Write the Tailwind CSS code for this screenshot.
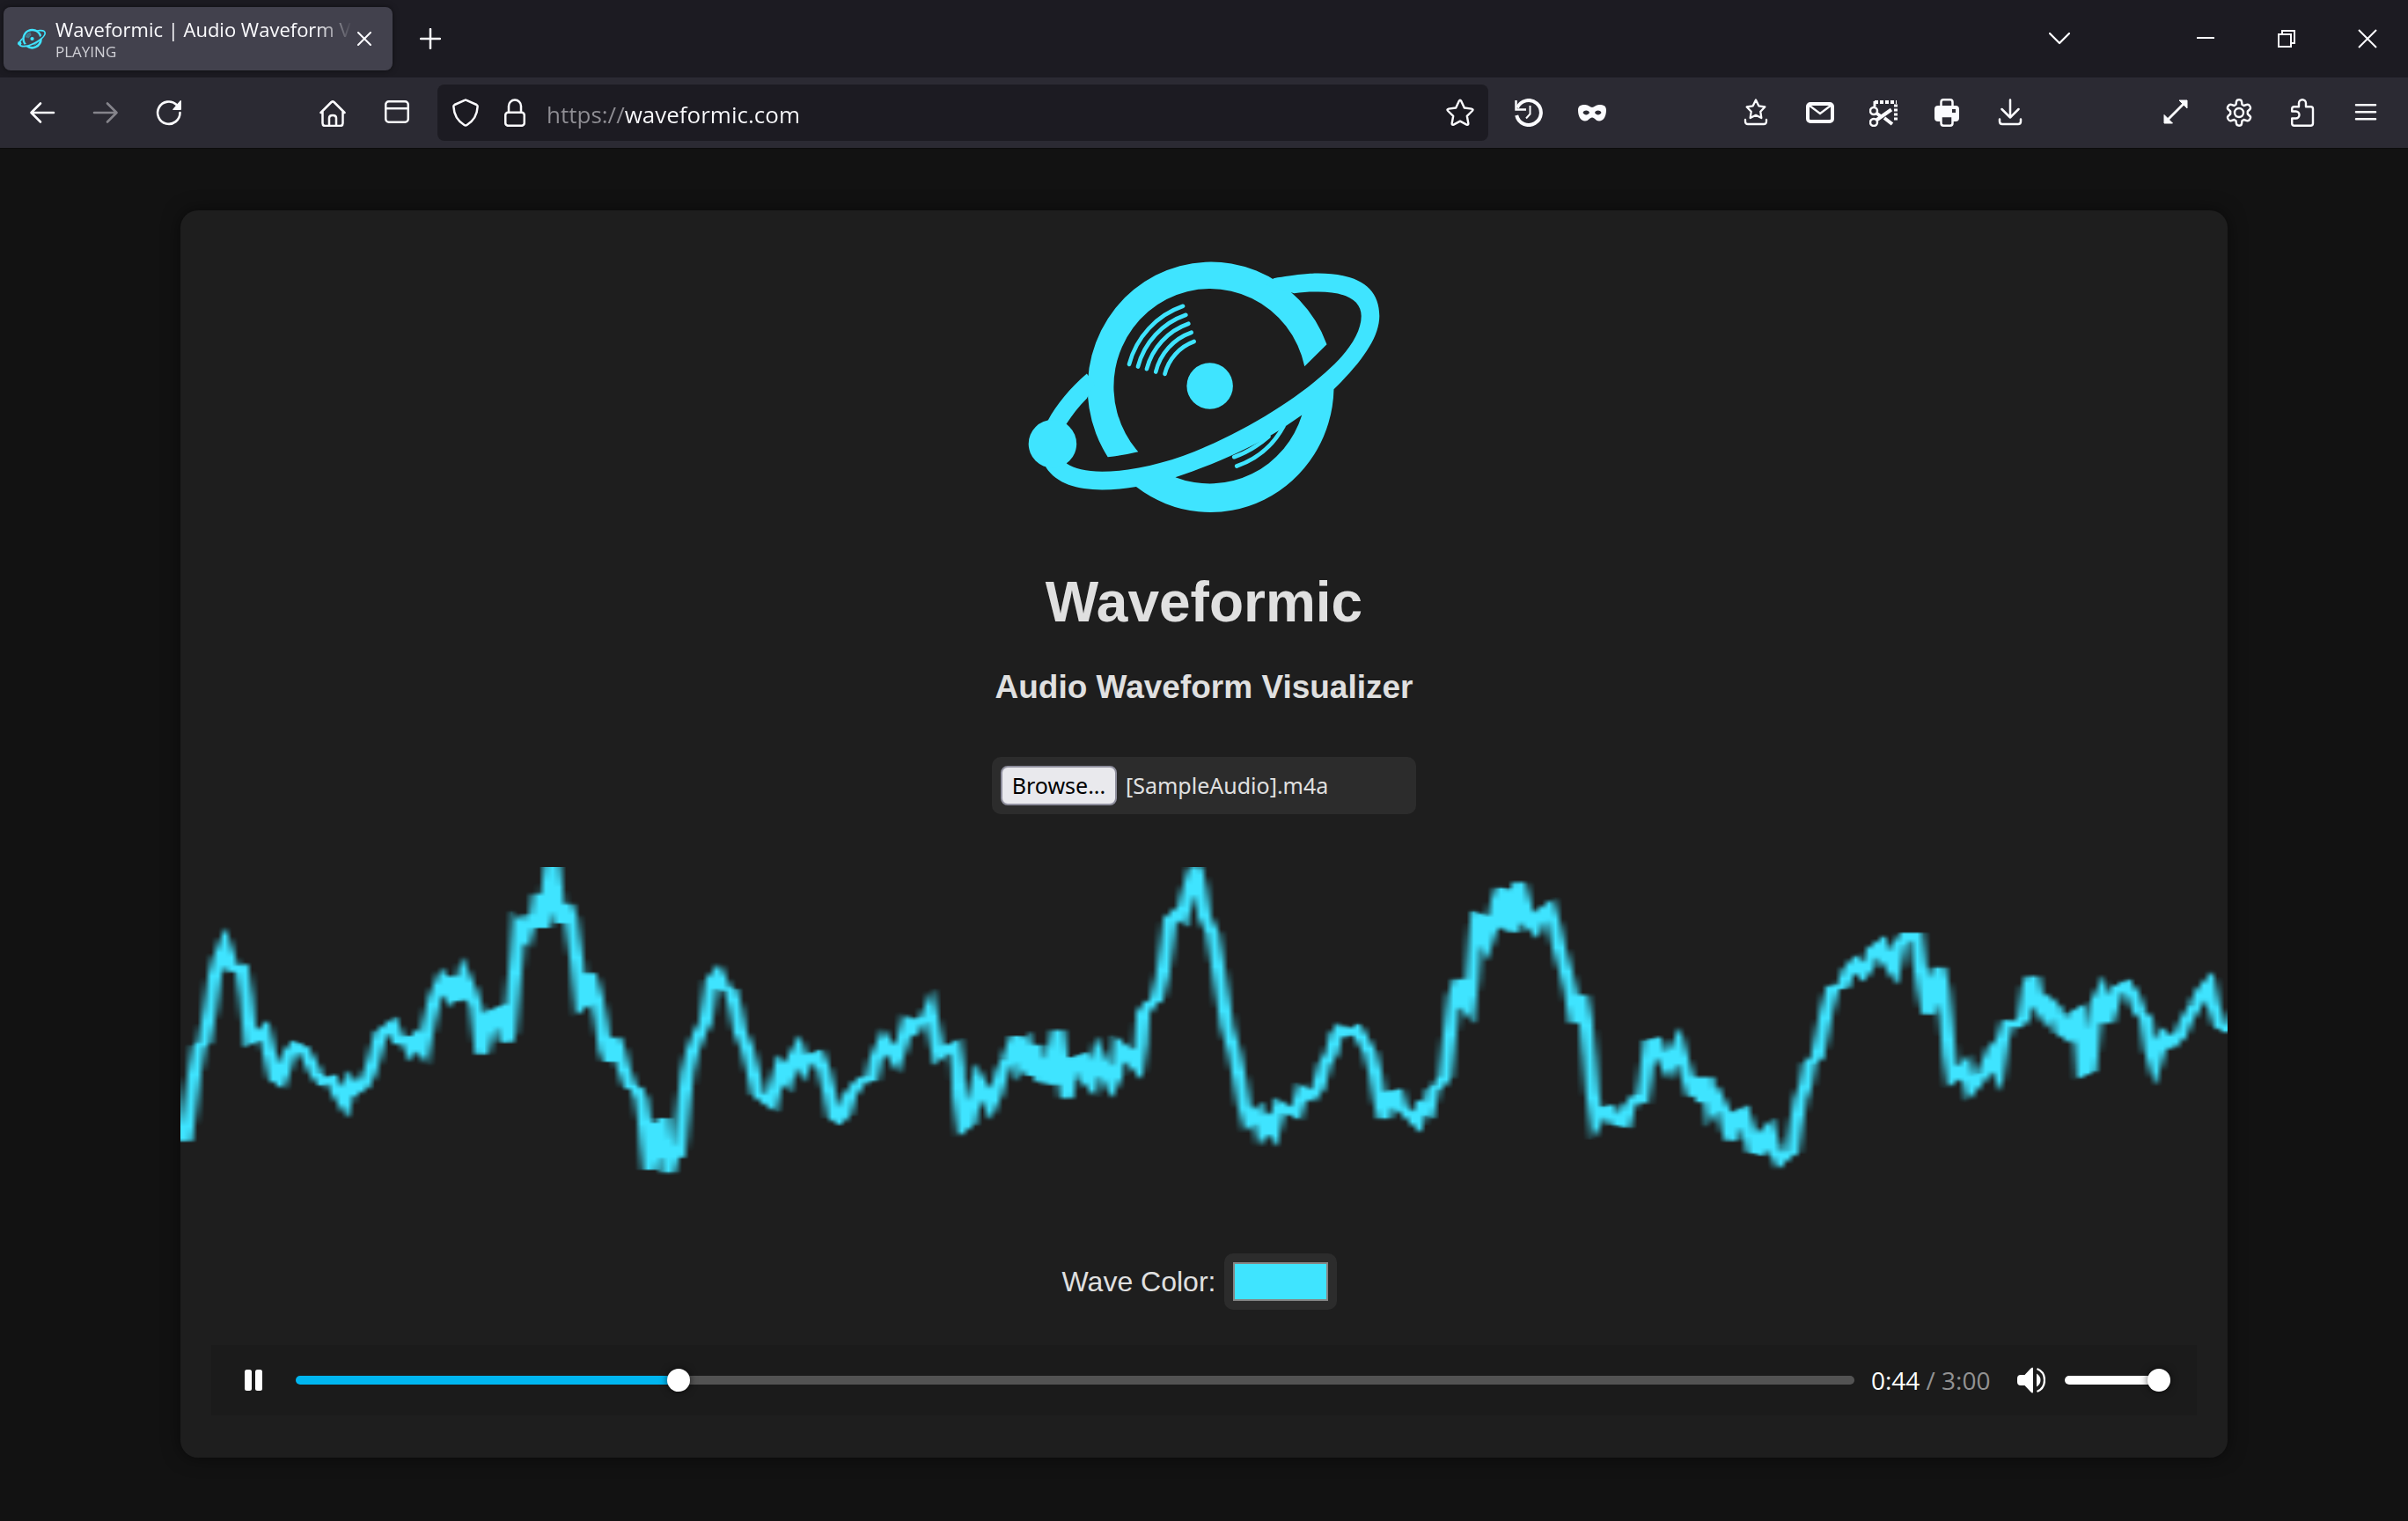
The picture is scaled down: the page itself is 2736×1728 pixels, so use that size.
<!DOCTYPE html>
<html lang="en">
<head>
<meta charset="utf-8">
<title>Waveformic | Audio Waveform Visualizer</title>
<script src="https://cdn.jsdelivr.net/npm/@tailwindcss/browser@4"></script>
</head>
<body class="flex min-h-screen flex-col bg-[#121212] font-['Open_Sans','Noto_Sans',sans-serif] text-[#fbfbfe]">

<svg class="hidden" aria-hidden="true">
  <symbol id="planet" viewBox="84 75 1200 864">
    <g fill="currentColor">
      <path d="M355 750A422 431 0 1 1 1104 365L1028 440A330 334.500 0 1 0 459 732Q410 744 355 750Z"/>
      <path fill-rule="evenodd" d="M922 139C1000 126 1040 122 1075 122C1210 122 1284 170 1284 268C1284 340 1225 425 1128 518A422 431 0 0 1 452 852C415 858 375 862 335 862C250 862 180 842 143 785L166 705L215 773C240 790 280 800 335 800C440 800 570 768 690 715C850 645 1000 550 1100 460C1170 400 1222 330 1222 268C1222 215 1170 185 1075 185C1050 184 1020 186 992 190L900 160ZM586 819C700 782 850 720 965 643L1019 606A330 334.500 0 0 1 586 819Z"/>
      <path d="M150 625C180 570 225 515 283 465L310 500L283 550C255 578 232 608 213 637L166 680Z"/>
      <circle cx="166" cy="705" r="82"/>
      <circle cx="704" cy="507" r="79"/>
    </g>
    <g fill="none" stroke="currentColor" stroke-width="14" stroke-linecap="round">
      <path d="M428 433A288 288 0 0 1 612 234M458 441A256 256 0 0 1 622 264M488 449A224 224 0 0 1 631 294M519 459A190 190 0 0 1 641 324M550 466A160 160 0 0 1 650 355"/>
      <path d="M796 781A290 290 0 0 0 956 645M787 750Q850 728 905 680"/>
    </g>
  </symbol>
</svg>

<header>
  <div class="flex h-[88px] items-center bg-[#1c1b22] pl-1">
    <div class="flex h-[72px] w-[442px] items-center rounded-lg bg-[#42414d] pl-4 shadow-[0_0_6px_rgba(0,0,0,0.5)]">
      <svg class="h-6 w-8 shrink-0 text-[#3fe4ff]"><use href="#planet"/></svg>
      <div class="ml-[11px] w-[337px] shrink-0 overflow-hidden whitespace-nowrap mask-r-from-88% mask-r-to-100%">
        <div class="text-[22px] leading-[30px]">Waveformic | Audio Waveform Visualizer</div>
        <div class="text-[17px] leading-[22px] text-[#d0d0d6]">PLAYING</div>
      </div>
      <button aria-label="Close tab" class="grid h-8 w-7 place-items-center"><svg class="size-4" viewBox="0 0 16 16" fill="none" stroke="currentColor" stroke-width="2" stroke-linecap="round"><path d="M1 1l14 14M15 1L1 15"/></svg></button>
    </div>
    <button aria-label="New tab" class="ml-[11px] grid size-16 place-items-center"><svg class="size-6" viewBox="0 0 24 24" fill="none" stroke="currentColor" stroke-width="2.500" stroke-linecap="round"><path d="M12 1v22M1 12h22"/></svg></button>
    <div class="flex-1"></div>
    <button aria-label="List all tabs" class="mr-[84px] grid size-[72px] place-items-center"><svg class="h-3.5 w-6" viewBox="0 0 24 14" fill="none" stroke="currentColor" stroke-width="2.300" stroke-linecap="round" stroke-linejoin="round"><path d="M1 1l11 11L23 1"/></svg></button>
    <button aria-label="Minimize" class="grid h-full w-[92px] place-items-center"><svg class="size-5" viewBox="0 0 20 20" fill="currentColor"><path d="M0 8h20v2H0z"/></svg></button>
    <button aria-label="Restore" class="grid h-full w-[92px] place-items-center"><svg class="size-5" viewBox="0 0 20 20" fill="none" stroke="currentColor" stroke-width="2"><path d="M1 5h14v14H1zM5 5V1h14v14h-4"/></svg></button>
    <button aria-label="Close window" class="grid h-full w-[92px] place-items-center"><svg class="size-[22px]" viewBox="0 0 22 22" fill="none" stroke="currentColor" stroke-width="2"><path d="M1 1l20 20M21 1L1 21"/></svg></button>
  </div>

  <nav class="flex h-[81px] items-center border-b border-[#0c0c0d] bg-[#2b2a33] px-3" aria-label="Browser toolbar">
    <button aria-label="Back" class="grid size-[72px] place-items-center"><svg class="size-8" viewBox="0 0 32 32" fill="none" stroke="currentColor" stroke-width="2.600" stroke-linecap="round" stroke-linejoin="round"><path d="M29 16H3.500M14 5.500L3.500 16L14 26.500"/></svg></button>
    <button aria-label="Forward" class="grid size-[72px] place-items-center text-[#85848b]"><svg class="size-8" viewBox="0 0 32 32" fill="none" stroke="currentColor" stroke-width="2.600" stroke-linecap="round" stroke-linejoin="round"><path d="M3 16h25.500M18 5.500L28.500 16L18 26.500"/></svg></button>
    <button aria-label="Reload" class="grid size-[72px] place-items-center"><svg class="size-8" viewBox="0 0 32 32"><path d="M28.500 16A12.700 12.700 0 1 1 24.600 7" fill="none" stroke="currentColor" stroke-width="2.600" stroke-linecap="round"/><path d="M30 3v9q0 1-1 1h-8q-1.500 0-.6-1L28.500 2.500Q30 1.500 30 3z" fill="currentColor"/></svg></button>
    <div class="w-[114px]"></div>
    <button aria-label="Home" class="grid size-[72px] place-items-center"><svg class="size-8" viewBox="0 0 32 32" fill="none" stroke="currentColor" stroke-width="2.500" stroke-linecap="round" stroke-linejoin="round"><path d="M2.500 16L14.500 4Q16 2.800 17.500 4L29.500 16M4.500 14.500V28Q4.500 31 7.500 31H24.500Q27.500 31 27.500 28V14.500M12 31V22Q12 19 16 19T20 22V31"/></svg></button>
    <button aria-label="Sidebars" class="grid size-[73px] place-items-center"><svg class="size-8" viewBox="0 0 32 32" fill="none" stroke="currentColor" stroke-width="2.500"><rect x="3.250" y="3.250" width="25.500" height="23.500" rx="3.500"/><path d="M3 11.200h26"/></svg></button>

    <div class="ml-[10px] flex h-16 flex-1 items-center rounded-lg bg-[#1c1b22] pl-4">
      <svg class="size-8" viewBox="0 0 32 32" fill="none" stroke="currentColor" stroke-width="2.500" stroke-linejoin="round"><path d="M15 1.800L3.500 7Q2.200 7.700 2.400 9.300Q3 23 14.500 30Q16 31 17.500 30Q29 23 29.600 9.300Q29.800 7.700 28.500 7L17 1.800Q16 1.300 15 1.800Z"/></svg>
      <svg class="ml-6 size-8" viewBox="0 0 32 32" fill="none" stroke="currentColor" stroke-width="2.500"><rect x="5.250" y="15.800" width="21.500" height="15" rx="3"/><path d="M9 15.500V8.500a7 7 0 0 1 14 0v7"/></svg>
      <input aria-label="Address" type="text" value="https://waveformic.com" class="ml-5 h-full flex-1 bg-[linear-gradient(90deg,#8f8e94_89px,#fbfbfe_89px)] bg-clip-text pt-1 text-[26px] text-transparent caret-white outline-none">
      <button aria-label="Bookmark this page" class="grid size-16 place-items-center"><svg class="size-8" viewBox="0 0 32 32" fill="none" stroke="currentColor" stroke-width="2.400" stroke-linejoin="round"><path d="M14.800 2.700Q16 .8 17.200 2.700L20.800 10.500L29 11.600Q31.500 12.200 29.800 14L23.800 19.800L25.300 28Q25.500 30.500 23.400 29.600L16 25.600L8.600 29.600Q6.500 30.500 6.700 28L8.200 19.800L2.200 14Q.5 12.200 3 11.600L11.200 10.500Z"/></svg></button>
    </div>

    <button aria-label="History" class="ml-[10px] grid size-[72px] place-items-center"><svg class="size-8" viewBox="0 0 32 32" fill="none" stroke="currentColor"><path d="M3 10.500A14 14 0 1 1 2.200 19" stroke-width="4"/><path d="M1.500 2v10.500H13" stroke-width="2.500"/><path d="M17.500 8v9.500l-4.500 5" stroke-width="2"/></svg></button>
    <button aria-label="Private window" class="grid size-[72px] place-items-center"><svg class="size-8" viewBox="0 0 32 32" fill="currentColor"><path fill-rule="evenodd" d="M8 7c4 0 5.500 3 8 3s4-3 8-3c5 0 8 1.500 8 6 0 7-3 12.500-8 12.500-4 0-5-4-8-4s-4 4-8 4c-5 0-8-5.500-8-12.500 0-4.500 3-6 8-6zM5.500 16c1.500 3.200 6 3.200 7.500 0-1.500-3.200-6-3.200-7.500 0zm13.500 0c1.500 3.200 6 3.200 7.500 0-1.500-3.200-6-3.200-7.500 0z"/></svg></button>
    <div class="w-[114px]"></div>
    <button aria-label="Bookmarks menu" class="grid size-[72px] place-items-center"><svg class="size-8" viewBox="0 0 32 32" fill="none" stroke="currentColor" stroke-width="2.300" stroke-linejoin="round" stroke-linecap="round"><path d="M16 1.500L19.300 8.300L26.300 9.500L21.300 14.800L22.300 22L16 18.800L9.700 22L10.700 14.800L5.700 9.500L12.700 8.300ZM4 24v2q0 3 3 3h18q3 0 3-3v-2"/></svg></button>
    <button aria-label="Email link" class="grid size-[73px] place-items-center"><svg class="size-8" viewBox="0 0 32 32" fill="none" stroke="currentColor"><rect x="2" y="6" width="28" height="20" rx="3" stroke-width="4"/><path d="M4 8l12 9L28 8" stroke-width="2.200"/></svg></button>
    <button aria-label="Screenshot" class="grid size-[72px] place-items-center"><svg class="size-8" viewBox="0 0 32 32" fill="none" stroke="currentColor"><path d="M6 4h25" stroke-width="4" stroke-dasharray="4 2"/><path d="M30 6.500V26" stroke-width="4" stroke-dasharray="3 2"/><path d="M6 3v6" stroke-width="3"/><circle cx="5" cy="14" r="4" stroke-width="2.500"/><circle cx="5" cy="27" r="4" stroke-width="2.500"/><path d="M8 24.500L25 12.500M8 16.500l6 4.500M17 22l9 7" stroke-width="4"/></svg></button>
    <button aria-label="Print" class="grid size-[72px] place-items-center"><svg class="size-8" viewBox="0 0 32 32"><path d="M9.500 9V4q0-2.700 2.700-2.700h7.600q2.700 0 2.700 2.700v5" fill="none" stroke="currentColor" stroke-width="2.500"/><path fill="currentColor" fill-rule="evenodd" d="M6 8h20q4 0 4 4v10q0 4-4 4H6q-4 0-4-4V12q0-4 4-4zm16 4v4h4v-4z"/><path d="M9.500 20h13v8q0 2.700-2.700 2.700h-7.600q-2.700 0-2.700-2.700z" fill="#2b2a33" stroke="currentColor" stroke-width="2.500"/></svg></button>
    <button aria-label="Downloads" class="grid size-[71px] place-items-center"><svg class="size-8" viewBox="0 0 32 32" fill="none" stroke="currentColor" stroke-width="2.500" stroke-linecap="round" stroke-linejoin="round"><path d="M16 1.500v20M6.500 12L16 21.500L25.500 12M4 23.500V26q0 3 3 3h18q3 0 3-3v-2.500"/></svg></button>
    <div class="w-[117px]"></div>
    <button aria-label="Full screen" class="grid size-[72px] place-items-center"><svg class="size-8" viewBox="0 0 32 32" fill="currentColor"><path d="M20 2h9v9L20 2zM3 18.500v9.500h9.500z" stroke="currentColor" stroke-width="1" stroke-linejoin="round"/><path d="M6 25L26 5" stroke="currentColor" stroke-width="2.800"/></svg></button>
    <button aria-label="Settings" class="grid size-[72px] place-items-center"><svg class="size-8" viewBox="0 0 32 32" fill="none" stroke="currentColor" stroke-width="2.400" stroke-linejoin="round"><circle cx="16" cy="16" r="5"/><path d="M13 3.500Q13.300 1.300 16 1.300T19 3.500L19.500 6.800L21.500 8L24.800 6.800Q27 6.200 28.300 8.500T28.500 12L25.800 14.500V17.500L28.500 20Q29.800 21.200 28.300 23.500T24.800 25.200L21.500 24L19.500 25.200L19 28.500Q18.700 30.700 16 30.700T13 28.500L12.500 25.200L10.500 24L7.200 25.200Q5 25.800 3.700 23.500T3.500 20L6.200 17.500V14.500L3.500 12Q2.200 10.800 3.700 8.500T7.200 6.800L10.500 8L12.500 6.800Z"/></svg></button>
    <button aria-label="Extensions" class="grid size-[72px] place-items-center"><svg class="size-8" viewBox="0 0 32 32" fill="none" stroke="currentColor" stroke-width="2.400" stroke-linejoin="round"><path d="M12 9.300V5.200a4 4 0 0 1 8 0V9.300H25.500Q28 9.300 28 11.800V28Q28 30.700 25.300 30.700H6.700Q4.200 30.700 4.200 28V22.500H8.500a4 4 0 0 0 0-8H4.200V11.800Q4.200 9.300 6.700 9.300Z"/></svg></button>
    <button aria-label="Open application menu" class="grid size-[72px] place-items-center"><svg class="size-8" viewBox="0 0 32 32" fill="none" stroke="currentColor" stroke-width="2.500" stroke-linecap="round"><path d="M5 7.200h22M5 15.200h22M5 23.200h22"/></svg></button>
  </nav>
</header>

<main class="mx-auto mt-[70px] mb-[69px] flex w-[85%] flex-col items-center rounded-[20px] bg-[#1e1e1e] pt-14 pb-12 font-['Liberation_Sans',Arial,sans-serif] text-[#e0e0e0] shadow-[0_0_20px_rgba(0,0,0,0.5)]">
  <svg class="h-[287px] w-[400px] text-[#3fe4ff]" role="img" aria-label="Waveformic logo"><use href="#planet"/></svg>
  <h1 class="mt-[65px] text-[64px] leading-[74px] font-bold">Waveformic</h1>
  <h2 class="mt-[39px] text-[37px] leading-[42px] font-bold">Audio Waveform Visualizer</h2>

  <div class="mt-[58px] flex h-[65px] w-[482px] items-center rounded-[10px] bg-[#2c2c2c] px-[10px] font-['Noto_Sans','Open_Sans',sans-serif] text-[25px]">
    <label for="audio-file" class="flex h-[45px] w-[132px] items-center justify-center rounded-lg border-2 border-[#8f8f9d] bg-[#e9e9ed] text-black">Browse...</label>
    <input id="audio-file" type="file" accept="audio/*" class="hidden">
    <span class="ml-[10px]">[SampleAudio].m4a</span>
  </div>

  <canvas id="waveform" width="300" height="150" class="mt-[60px] h-[400px] w-full"></canvas>

  <div class="mt-[39px] mr-[10px] flex items-center gap-[10px]">
    <label for="wave-color" class="text-[32px]">Wave Color:</label>
    <input id="wave-color" type="color" value="#3fe4ff" class="h-16 w-32 appearance-none rounded-[10px] bg-[#2c2c2c] p-[10px] [&::-webkit-color-swatch]:rounded-none [&::-webkit-color-swatch]:border-2 [&::-webkit-color-swatch]:border-[#858585] [&::-webkit-color-swatch-wrapper]:p-0">
  </div>

  <div class="mt-10 flex h-20 w-[97%] items-center bg-[#1b1b1b] pr-[30px] pl-[26px] font-['Open_Sans','Noto_Sans',sans-serif]">
    <button aria-label="Pause" class="grid size-11 place-items-center text-white"><svg class="h-6 w-5" viewBox="0 0 20 24" fill="currentColor"><rect width="8" height="24" rx="2.500"/><rect x="12" width="8" height="24" rx="2.500"/></svg></button>
    <input aria-label="Position" type="range" min="0" max="180" step="any" value="43.500" class="ml-[26px] h-[10px] min-w-0 flex-1 appearance-none rounded-full bg-[linear-gradient(90deg,#00b6f0_24.5%,#535353_24.5%)] [&::-webkit-slider-thumb]:size-[26px] [&::-webkit-slider-thumb]:appearance-none [&::-webkit-slider-thumb]:rounded-full [&::-webkit-slider-thumb]:bg-white [&::-webkit-slider-thumb]:shadow-[0_0_8px_rgba(0,0,0,0.65)]">
    <div class="ml-[19px] w-[136px] text-[28px] whitespace-nowrap text-[#929292]"><span class="text-white">0:44</span> / 3:00</div>
    <button aria-label="Mute" class="ml-6 grid size-11 place-items-center text-white"><svg class="size-8" viewBox="0 0 32 32" fill="currentColor"><path d="M4 10h4.500L15 3q3-3 3 0v26q0 3-3 0L8.500 22H4q-4 0-4-4v-4q0-4 4-4zM22 8.500q4.500 2.500 4.500 7.500T22 23.500z"/><path d="M22.500 3Q31 6.500 31 16T22.500 29" fill="none" stroke="currentColor" stroke-width="2.300"/></svg></button>
    <input aria-label="Volume" type="range" min="0" max="1" step="any" value="1" class="ml-4 h-[10px] w-[120px] appearance-none rounded-full bg-white [&::-webkit-slider-thumb]:size-[26px] [&::-webkit-slider-thumb]:appearance-none [&::-webkit-slider-thumb]:rounded-full [&::-webkit-slider-thumb]:bg-white [&::-webkit-slider-thumb]:shadow-[0_0_8px_rgba(0,0,0,0.65)]">
  </div>
</main>

<script>
// Sample frame of the signal: each run has its own x origin, then x,y pairs.
const runs = [
  { x0: -29, pts: [40,1012,50,900,60,780,70,690,82,675,95,560,105,450,115,390,127,345,145,425,165,420,175,520,185,670,198,660,215,635,228,720,240,800,250,810,260,770,272,710,285,685,300,695,315,735,330,780,345,810,365,800,380,850,395,885,408,815,420,840,435,825,450,780,462,720,475,645,500,615,515,670,530,665,542,700,555,665,570,700,582,610,595,525,612,465,627,505,636,450,647,535,660,450,675,500,688,560,695,650,700,715,712,640,722,575,738,565,745,620,755,675,762,640,770,500,778,370,782,280,798,310,810,240,818,285,828,170,838,285,846,180,857,40,868,190,878,270,888,205,898,250,905,330,912,400,922,550,930,540,940,440,955,520,965,600,975,700,985,740,995,660,1005,700,1015,760,1030,825,1045,835,1055,870,1062,940,1068,1030,1074,1110,1092,950,1097,1070,1103,935,1115,1120,1125,1060,1138,1060,1143,990,1150,880,1158,780,1170,700,1185,645,1198,610,1205,540,1212,465,1225,442,1240,490,1255,500,1265,560,1275,640,1290,690,1302,760,1315,850,1330,870,1345,885,1355,820,1365,765,1380,800,1392,735,1405,700,1418,760,1430,725,1448,715,1462,770,1475,850,1485,930,1495,940,1508,920,1520,855,1540,815] },
  { x0: 1519, pts: [5,800,20,800,30,730,48,670,60,700,75,735,88,680,100,610,115,630,125,600,140,600,150,565,160,640,170,720,185,700,205,685,212,760,215,860,225,965,238,950,248,870,258,805,270,840,285,890,297,850,310,780,325,730,343,655,352,740,365,700,378,790,388,685,398,810,408,730,420,820,427,700,435,635,445,760,455,865,468,735,480,730,490,725,498,800,510,820,525,720,540,770,555,820,565,790,572,685,585,700,600,740,612,760,620,680,625,575,640,545,655,530,668,450,678,340,685,255,700,235,712,250,722,180,735,110,742,80,752,150,762,250,780,305,790,400,802,520,812,620,828,710,840,800,850,890,860,945,880,915,890,980,903,950,915,980,930,890,945,905,965,920,980,840,1000,860,1015,830,1030,750,1045,710,1055,650,1065,630,1080,645,1100,630,1115,670,1130,710,1142,780,1152,870,1162,935,1175,850,1190,845,1200,900,1215,920,1235,950,1245,895,1260,910,1270,840,1285,820,1298,790,1305,690,1312,600,1318,520,1330,460,1340,540,1350,560,1358,460,1365,320,1370,245,1380,250,1392,325,1405,270,1415,190,1425,150,1435,290,1443,160,1450,300,1462,130,1475,205,1485,270,1498,290,1512,235] },
  { x0: 3048, pts: [0,215,12,280,22,350,35,420,48,500,60,610,72,515,82,600,90,720,97,850,106,945,122,905,135,900,150,950,168,955,178,895,195,865,208,870,215,800,225,675,238,670,250,720,265,760,288,685,300,750,312,810,322,860,332,795,342,880,352,795,362,900,375,865,390,910,400,980,408,1010,418,920,432,910,445,970,455,1045,470,1050,480,985,490,970,500,1030,515,1080,530,1060,542,1050,550,960,560,870,572,820,580,750,598,725,608,650,618,570,632,490,655,485,668,430,682,405,700,440,712,415,722,360,740,340,750,390,768,430,780,345,795,310,818,310,825,400,835,500,845,580,855,500,868,420,878,500,885,600,892,720,900,800,915,785,928,760,940,835,955,810,970,775,985,720,1000,770,1010,670,1022,610,1045,615,1058,590,1068,490,1077,450,1090,540,1105,580,1115,540,1128,560,1140,640,1155,655,1168,580,1180,570,1190,780,1205,770,1212,660,1220,540,1230,510,1243,610,1255,550,1268,490,1285,477,1300,510,1315,570,1330,595,1340,700,1350,750,1362,690,1372,655,1388,680,1405,655,1420,600,1440,550,1455,500,1470,475,1480,550,1495,620,1520,640] }
];
const ctx = document.getElementById('waveform').getContext('2d');
const colorInput = document.getElementById('wave-color');
function draw() {
  ctx.clearRect(0, 0, 300, 150);
  ctx.strokeStyle = colorInput.value;
  ctx.lineWidth = 2;
  ctx.beginPath();
  for (const run of runs)
    for (let i = 0; i < run.pts.length; i += 2)
      ctx.lineTo((run.pts[i] + run.x0) / 15.2, (run.pts[i + 1] - 78) / 8);
  ctx.stroke();
}
colorInput.addEventListener('input', draw);
draw();
</script>
</body>
</html>
